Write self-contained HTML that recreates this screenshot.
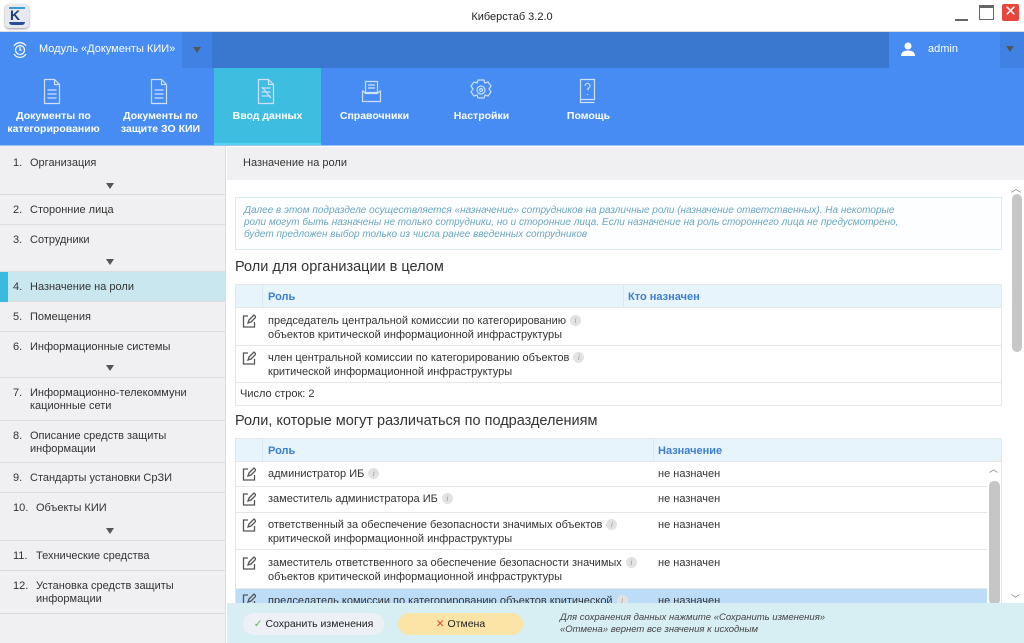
<!DOCTYPE html>
<html><head><meta charset="utf-8"><style>
*{box-sizing:border-box;margin:0;padding:0}
body{width:1024px;height:643px;overflow:hidden;position:relative;font-family:"Liberation Sans","DejaVu Sans",sans-serif;background:#fff;color:#333}
.a{position:absolute}
.tb{left:0;top:0;width:1024px;height:32px;background:#fff;border-bottom:1px solid #ddd}
.mod{left:0;top:32px;width:1024px;height:36px;background:#3a77cf}
.tool{left:0;top:68px;width:1024px;height:78px;background:#468cf3}
.tab{top:68px;height:78px;color:#fff;font-size:10.5px;font-weight:bold;text-align:center;line-height:13px}
.side{left:0;top:146px;width:226px;height:497px;background:#f0f0f2;border-right:1px solid #ddd}
.si{position:absolute;left:0;width:226px;border-bottom:1px solid #dcdcdc;font-size:11px;color:#333}
.si span{position:absolute;left:13px}
.si b{font-weight:normal;position:absolute;left:30px;line-height:13px}
.arr{position:absolute;left:106px;width:0;height:0;border-left:4px solid transparent;border-right:4px solid transparent;border-top:6px solid #555}
.tbl{left:235px;width:767px;border:1px solid #e3e7ea}
.row{position:absolute;left:0;width:765px;border-bottom:1px solid #e6e6e6;font-size:11px}
.th{background:#e8f4fb;color:#3c7fd0;font-weight:bold}
.ed{position:absolute;left:6px;width:14px;height:14px}
.i{display:inline-block;width:11px;height:11px;border-radius:50%;background:#e2e2e2;color:#999;font-size:8px;font-style:italic;text-align:center;line-height:11px;margin-left:4px;vertical-align:1px;font-family:"Liberation Serif",serif}
</style></head><body>
<div class="a tb"></div>
<div class="a" style="left:5px;top:4px;width:24px;height:24px;border-radius:4px;background:#e6e9ee;box-shadow:0 1px 2px #999"></div>
<div class="a" style="left:9px;top:7px;width:16px;height:2px;background:#3a9bd8"></div>
<div class="a" style="left:10px;top:7px;font-size:14px;font-weight:bold;color:#1d3c7a">K</div>
<div class="a" style="left:9px;top:22px;width:16px;height:3px;background:#2a4f99;border-radius:0 0 6px 6px"></div>
<div class="a" style="left:0;top:11px;width:1024px;text-align:center;font-size:11px;color:#222">Киберстаб 3.2.0</div>
<div class="a" style="left:955px;top:19px;width:13px;height:2px;background:#666"></div>
<div class="a" style="left:979px;top:5px;width:15px;height:15px;border:1.5px solid #666;border-top-width:3px"></div>
<div class="a" style="left:1002px;top:4px;width:17px;height:17px;background:#e8453c;border-radius:2px;color:#fff;font-size:15px;text-align:center;line-height:16px">✕</div>

<div class="a mod"></div>
<div class="a" style="left:0;top:32px;width:182px;height:36px;background:#468cf3"></div>
<div class="a" style="left:182px;top:32px;width:30px;height:36px;background:#3f82e4"></div>
<div class="a" style="left:193px;top:47px;border-left:4px solid transparent;border-right:4px solid transparent;border-top:6px solid #555"></div>
<svg class="a" style="left:10px;top:40px" width="20" height="20" viewBox="0 0 20 20" fill="none" stroke="#fff" stroke-width="1.2"><circle cx="10" cy="10" r="4.5"/><path d="M4 6a7 7 0 0 1 12 0M16 14a7 7 0 0 1-12 0"/><path d="M10 7v3h1.5"/></svg>
<div class="a" style="left:39px;top:43px;font-size:11px;color:#fff">Модуль «Документы КИИ»</div>
<div class="a" style="left:889px;top:32px;width:111px;height:36px;background:#468cf3"></div>
<div class="a" style="left:1000px;top:32px;width:24px;height:36px;background:#3f82e4"></div>
<div class="a" style="left:1006px;top:46px;border-left:4px solid transparent;border-right:4px solid transparent;border-top:6px solid #555"></div>
<svg class="a" style="left:900px;top:41px" width="16" height="16" viewBox="0 0 16 16" fill="#fff"><circle cx="8" cy="5" r="3.5"/><path d="M1 15c0-4 3-5.5 7-5.5s7 1.5 7 5.5z"/></svg>
<div class="a" style="left:928px;top:43px;font-size:11px;color:#fff">admin</div>

<div class="a tool"></div>
<div class="a" style="left:214px;top:68px;width:107px;height:78px;background:#3dbde0"></div>
<div class="a" style="left:214px;top:143px;width:107px;height:3px;background:#51d4ee"></div>
<div class="a" style="left:0;top:145px;width:1024px;height:1px;background:#9cc2f2"></div>
<svg class="a" style="left:0;top:78px" width="640" height="28" fill="none" stroke="#cfe0fb" stroke-width="1.2">
<path d="M44.5 1.5h10l5 5v19h-15z M54.5 1.5v5h5 M47.5 12h9M47.5 16h9M47.5 20h9"/>
<path d="M151.5 1.5h10l5 5v19h-15z M161.5 1.5v5h5 M154.5 12h9M154.5 16h9M154.5 20h9"/>
<path d="M258.5 1.5h10l5 5v19h-15z M268.5 1.5v5h5 M261.5 10h9M261.5 14h9M261.5 18h9M262 9l9 11"/>
<path d="M365.5 3.5h12v11h-12z M368 7h7M368 10h7 M362.5 12.5v11h18v-11 M362.5 12.5l3 3h12l3-3"/>
<circle cx="481" cy="12" r="4"/><circle cx="481" cy="12" r="1.5"/><path d="M478 2h6l1 3 3-1 3 4-2 3 2 3-3 4-3-1-1 3h-6l-1-3-3 1-3-4 2-3-2-3 3-4 3 1z"/>
<path d="M580.5 1.5h14v20h-14z M580.5 21.5v3h14 M585 8a2.5 2.5 0 1 1 3 2.4v2 M587.5 16v1"/>
</svg>
<div class="a tab" style="left:0;width:107px;top:110px">Документы по<br>категорированию</div>
<div class="a tab" style="left:107px;width:107px;top:110px">Документы по<br>защите ЗО КИИ</div>
<div class="a tab" style="left:214px;width:107px;top:110px">Ввод данных</div>
<div class="a tab" style="left:321px;width:107px;top:110px">Справочники</div>
<div class="a tab" style="left:428px;width:107px;top:110px">Настройки</div>
<div class="a tab" style="left:535px;width:107px;top:110px">Помощь</div>

<div class="a side">
<div class="si" style="top:1px;height:48px"><span style="top:10px">1.</span><b style="top:10px">Организация</b><i class="arr" style="top:36px"></i></div>
<div class="si" style="top:49px;height:30px"><span style="top:9px">2.</span><b style="top:9px">Сторонние лица</b></div>
<div class="si" style="top:79px;height:47px"><span style="top:9px">3.</span><b style="top:9px">Сотрудники</b><i class="arr" style="top:34px"></i></div>
<div class="si" style="top:126px;height:30px;background:#c9e7ef"><i style="position:absolute;left:0;top:0;width:8px;height:30px;background:#3bbadf"></i><span style="top:9px">4.</span><b style="top:9px">Назначение на роли</b></div>
<div class="si" style="top:156px;height:30px"><span style="top:9px">5.</span><b style="top:9px">Помещения</b></div>
<div class="si" style="top:186px;height:46px"><span style="top:9px">6.</span><b style="top:9px">Информационные системы</b><i class="arr" style="top:33px"></i></div>
<div class="si" style="top:232px;height:43px"><span style="top:9px">7.</span><b style="top:9px">Информационно-телекоммуни<br>кационные сети</b></div>
<div class="si" style="top:275px;height:42px"><span style="top:9px">8.</span><b style="top:9px">Описание средств защиты<br>информации</b></div>
<div class="si" style="top:317px;height:30px"><span style="top:9px">9.</span><b style="top:9px">Стандарты установки СрЗИ</b></div>
<div class="si" style="top:347px;height:48px"><span style="top:9px">10.</span><b style="top:9px;left:36px">Объекты КИИ</b><i class="arr" style="top:35px"></i></div>
<div class="si" style="top:395px;height:30px"><span style="top:9px">11.</span><b style="top:9px;left:36px">Технические средства</b></div>
<div class="si" style="top:425px;height:43px"><span style="top:9px">12.</span><b style="top:9px;left:36px">Установка средств защиты<br>информации</b></div>
</div>

<div class="a" style="left:227px;top:147px;width:797px;height:33px;background:#f0f0f2"></div>
<div class="a" style="left:243px;top:157px;font-size:11px;color:#333">Назначение на роли</div>
<div class="a" style="left:1010px;top:180px;width:14px;height:423px;background:#fff"></div>
<div class="a" style="left:1012px;top:194px;width:10px;height:158px;background:#c6c6c6;border-radius:5px"></div>
<div class="a" style="left:1011px;top:180px;font-size:10px;color:#777">︿</div>

<div class="a" style="left:235px;top:197px;width:767px;height:53px;border:1px solid #d7eaf2;background:#fcfeff"></div>
<div class="a" style="left:244px;top:205px;width:675px;font-size:10px;font-style:italic;color:#6aa5bf;line-height:12px">Далее в этом подразделе осуществляется «назначение» сотрудников на различные роли (назначение ответственных). На некоторые роли могут быть назначены не только сотрудники, но и сторонние лица. Если назначение на роль стороннего лица не предусмотрено, будет предложен выбор только из числа ранее введенных сотрудников</div>

<div class="a" style="left:235px;top:259px;font-size:14.5px;color:#333">Роли для организации в целом</div>
<div class="a tbl" style="top:284px;height:122px">
<div class="row th" style="top:0;height:23px"><i style="position:absolute;left:26px;top:0;height:22px;border-left:1px solid #dbe6ee"></i><span style="position:absolute;left:32px;top:6px">Роль</span><i style="position:absolute;left:387px;top:0;height:22px;border-left:1px solid #dbe6ee"></i><span style="position:absolute;left:392px;top:6px">Кто назначен</span></div>
<div class="row" style="top:23px;height:38px"><svg class="ed" style="top:6px" viewBox="0 0 14 14" fill="none" stroke="#555" stroke-width="1.3"><path d="M6 2H1.5v11h11V8M6 9l1-3 5-5 2 2-5 5z"/></svg><div style="position:absolute;left:32px;top:6px;line-height:14px">председатель центральной комиссии по категорированию<span class="i">i</span><br>объектов критической информационной инфраструктуры</div></div>
<div class="row" style="top:61px;height:37px"><svg class="ed" style="top:5px" viewBox="0 0 14 14" fill="none" stroke="#555" stroke-width="1.3"><path d="M6 2H1.5v11h11V8M6 9l1-3 5-5 2 2-5 5z"/></svg><div style="position:absolute;left:32px;top:5px;line-height:14px">член центральной комиссии по категорированию объектов<span class="i">i</span><br>критической информационной инфраструктуры</div></div>
<div style="position:absolute;left:4px;top:103px;font-size:11px">Число строк: 2</div>
</div>

<div class="a" style="left:235px;top:413px;font-size:14.5px;color:#333">Роли, которые могут различаться по подразделениям</div>
<div class="a tbl" style="top:438px;height:166px;overflow:hidden">
<div class="row th" style="top:0;height:23px"><i style="position:absolute;left:26px;top:0;height:22px;border-left:1px solid #dbe6ee"></i><span style="position:absolute;left:32px;top:6px">Роль</span><i style="position:absolute;left:417px;top:0;height:22px;border-left:1px solid #dbe6ee"></i><span style="position:absolute;left:422px;top:6px">Назначение</span></div>
<div class="row" style="top:23px;height:25px"><svg class="ed" style="top:5px" viewBox="0 0 14 14" fill="none" stroke="#555" stroke-width="1.3"><path d="M6 2H1.5v11h11V8M6 9l1-3 5-5 2 2-5 5z"/></svg><div style="position:absolute;left:32px;top:6px">администратор ИБ<span class="i">i</span></div><div style="position:absolute;left:422px;top:6px">не назначен</div></div>
<div class="row" style="top:48px;height:26px"><svg class="ed" style="top:5px" viewBox="0 0 14 14" fill="none" stroke="#555" stroke-width="1.3"><path d="M6 2H1.5v11h11V8M6 9l1-3 5-5 2 2-5 5z"/></svg><div style="position:absolute;left:32px;top:6px">заместитель администратора ИБ<span class="i">i</span></div><div style="position:absolute;left:422px;top:6px">не назначен</div></div>
<div class="row" style="top:74px;height:37px"><svg class="ed" style="top:5px" viewBox="0 0 14 14" fill="none" stroke="#555" stroke-width="1.3"><path d="M6 2H1.5v11h11V8M6 9l1-3 5-5 2 2-5 5z"/></svg><div style="position:absolute;left:32px;top:5px;line-height:14px">ответственный за обеспечение безопасности значимых объектов<span class="i">i</span><br>критической информационной инфраструктуры</div><div style="position:absolute;left:422px;top:6px">не назначен</div></div>
<div class="row" style="top:111px;height:39px"><svg class="ed" style="top:6px" viewBox="0 0 14 14" fill="none" stroke="#555" stroke-width="1.3"><path d="M6 2H1.5v11h11V8M6 9l1-3 5-5 2 2-5 5z"/></svg><div style="position:absolute;left:32px;top:6px;line-height:14px">заместитель ответственного за обеспечение безопасности значимых<span class="i">i</span><br>объектов критической информационной инфраструктуры</div><div style="position:absolute;left:422px;top:7px">не назначен</div></div>
<div class="row" style="top:150px;height:30px;background:#bcdcf7"><svg class="ed" style="top:4px" viewBox="0 0 14 14" fill="none" stroke="#555" stroke-width="1.3"><path d="M6 2H1.5v11h11V8M6 9l1-3 5-5 2 2-5 5z"/></svg><div style="position:absolute;left:32px;top:6px">председатель комиссии по категорированию объектов критической<span class="i">i</span></div><div style="position:absolute;left:422px;top:6px">не назначен</div></div>
<div style="position:absolute;left:751px;top:23px;width:14px;height:143px;background:#fff"></div>
<div style="position:absolute;left:753px;top:42px;width:11px;height:124px;background:#c6c6c6;border-radius:5px"></div>
<div style="position:absolute;left:753px;top:23px;font-size:9px;color:#777">︿</div>
</div>
<div class="a" style="left:1011px;top:592px;font-size:9px;color:#777">﹀</div>

<div class="a" style="left:227px;top:603px;width:797px;height:40px;background:#d7eef3"></div>
<div class="a" style="left:243px;top:613px;width:141px;height:22px;border-radius:11px;background:#edf1f5;font-size:10.5px;line-height:22px;text-align:center;color:#222"><span style="color:#5cb85c">✓</span> Сохранить изменения</div>
<div class="a" style="left:398px;top:613px;width:125px;height:22px;border-radius:11px;background:#fbe4a6;font-size:10.5px;line-height:22px;text-align:center;color:#222"><span style="color:#e8453c">✕</span> Отмена</div>
<div class="a" style="left:560px;top:612px;font-size:9.5px;font-style:italic;color:#444;line-height:12px">Для сохранения данных нажмите «Сохранить изменения»<br>«Отмена» вернет все значения к исходным</div>
</body></html>
